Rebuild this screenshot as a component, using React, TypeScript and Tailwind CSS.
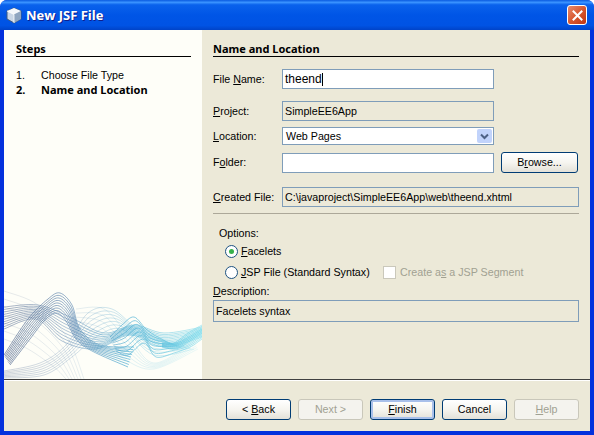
import React from "react";

type Pt = [number, number];

// smooth line through the points (catmull-rom turned into beziers)
const smooth = (pts: Pt[]) => {
  let d = `M${pts[0][0]} ${pts[0][1]}`;
  for (let i = 0; i < pts.length - 1; i++) {
    const p0 = pts[Math.max(i - 1, 0)];
    const p1 = pts[i];
    const p2 = pts[i + 1];
    const p3 = pts[Math.min(i + 2, pts.length - 1)];
    const c1x = p1[0] + (p2[0] - p0[0]) / 6;
    const c1y = p1[1] + (p2[1] - p0[1]) / 6;
    const c2x = p2[0] - (p3[0] - p1[0]) / 6;
    const c2y = p2[1] - (p3[1] - p1[1]) / 6;
    d += ` C${c1x.toFixed(1)} ${c1y.toFixed(1)} ${c2x.toFixed(1)} ${c2y.toFixed(1)} ${p2[0]} ${p2[1]}`;
  }
  return d;
};

// x from panel edge, y from the top of the drawing (y=280 on the page)
const bundles: { top: Pt[]; bottom: Pt[]; n: number; opacity: number; width: number }[] = [
  // tall peak on the left, comes down into the knot near x=75
  { top: [[0, 76], [24, 40], [44, 20], [56, 14], [68, 26], [76, 50], [96, 66], [130, 68]], bottom: [[6, 86], [26, 60], [40, 42], [52, 34], [62, 42], [72, 60], [88, 72], [124, 88]], n: 9, opacity: 0.72, width: 0.9 },
  // dark flat bundle falling from the left edge
  { top: [[0, 28], [34, 26], [66, 38], [100, 54], [130, 46], [160, 54], [198, 48]], bottom: [[0, 50], [32, 40], [58, 62], [92, 70], [126, 56], [160, 68], [198, 58]], n: 10, opacity: 0.55, width: 0.9 },
  // rising from bottom left, pale
  { top: [[0, 92], [36, 84], [62, 66], [84, 34], [108, 30], [136, 52], [170, 66]], bottom: [[0, 99], [40, 96], [68, 78], [92, 58], [118, 50], [150, 76], [190, 70]], n: 7, opacity: 0.3, width: 0.9 },
  // cyan double waves
  { top: [[106, 58], [118, 46], [130, 38], [142, 50], [154, 58], [172, 64], [198, 50]], bottom: [[112, 72], [124, 76], [140, 64], [152, 78], [170, 74], [186, 68], [198, 60]], n: 8, opacity: 0.68, width: 0.9 },
  // thick pale end of the ribbon
  { top: [[158, 64], [170, 64], [184, 54], [198, 46]], bottom: [[158, 68], [172, 70], [186, 62], [198, 54]], n: 7, opacity: 0.65, width: 0.9 },
  // faint long arcs
  { top: [[0, 12], [34, 26], [64, 60], [80, 100]], bottom: [[0, 60], [24, 70], [50, 88], [62, 100]], n: 7, opacity: 0.18, width: 0.8 },
  { top: [[72, 30], [100, 30], [124, 56], [150, 84], [190, 62]], bottom: [[70, 50], [96, 62], [120, 80], [150, 90], [194, 70]], n: 6, opacity: 0.2, width: 0.8 },
];

const Wave = () => {
  const lines: React.ReactNode[] = [];
  bundles.forEach((b, i) => {
    for (let k = 0; k < b.n; k++) {
      const t = k / (b.n - 1);
      const pts = b.top.map((p, j): Pt => [
        +(p[0] + (b.bottom[j][0] - p[0]) * t).toFixed(1),
        +(p[1] + (b.bottom[j][1] - p[1]) * t).toFixed(1),
      ]);
      lines.push(
        <path key={`${i}-${k}`} d={smooth(pts)} stroke="url(#waveColor)" strokeWidth={b.width} strokeOpacity={b.opacity} fill="none" />
      );
    }
  });
  return (
    <svg width="198" height="100" viewBox="0 0 198 100" className="block">
      <defs>
        <linearGradient id="waveColor" gradientUnits="userSpaceOnUse" x1="0" y1="0" x2="198" y2="0">
          <stop offset="0" stopColor="#4f6288" />
          <stop offset="0.35" stopColor="#5f8ab4" />
          <stop offset="0.65" stopColor="#3fabd2" />
          <stop offset="1" stopColor="#7fdcec" />
        </linearGradient>
      </defs>
      {lines}
    </svg>
  );
};

const CubeIcon = () => (
  <svg width="16" height="17" viewBox="0 0 16 17">
    <path d="M8 1 L15 4 L15 12 L8 16 L1 12 L1 4 Z" fill="#c9d6e6" stroke="#3c5a80" strokeWidth="1" />
    <path d="M8 1 L15 4 L8 7.5 L1 4 Z" fill="#f4f7fb" />
    <path d="M8 7.5 L15 4 L15 12 L8 16 Z" fill="#8fa5c0" />
    <path d="M1 4 L8 7.5 L8 16" fill="none" stroke="#ffffff" strokeWidth="0.8" />
  </svg>
);

const CloseIcon = () => (
  <svg width="11" height="11" viewBox="0 0 11 11">
    <path d="M1.5 1.5 L9.5 9.5 M9.5 1.5 L1.5 9.5" stroke="#fff" strokeWidth="2" strokeLinecap="square" />
  </svg>
);

const fieldBorder = "border border-[#7f9db9]";
const boldText = "font-bold font-['Noto_Sans',sans-serif] text-[11px]";

const Label = ({ children }: { children: React.ReactNode }) => (
  <div className="w-[69px] shrink-0 whitespace-nowrap">{children}</div>
);

const XpButton = ({ children, width, disabled, active }: { children: React.ReactNode; width: string; disabled?: boolean; active?: boolean }) => (
  <div
    className={
      (disabled
        ? "border-[#c9c7ba] bg-[#f4f3ee] text-[#a1a192] "
        : "border-[#003c74] bg-linear-to-b from-white via-[#f6f5f0] to-[#e3e1d8] text-black ") +
      (active ? "shadow-[inset_0_0_0_2px_#a9c0ea] " : "") +
      width +
      " h-[21px] flex items-center justify-center rounded-[3px] border"
    }
  >
    <span>{children}</span>
  </div>
);

export default function App() {
  return (
    <div className="w-[594px] h-[435px] flex flex-col rounded-t-[7px] overflow-hidden bg-[#0331dd] text-[10.7px] leading-[13px] text-black font-['Liberation_Sans',sans-serif]">
      <div className="h-[30px] shrink-0 flex items-center pl-[6px] pr-[7px] bg-[linear-gradient(to_bottom,#0a5be0_0%,#3a93ff_8%,#0a62ec_16%,#0055e6_50%,#0053e4_85%,#0043c8_100%)]">
        <CubeIcon />
        <div className="ml-[4px] text-white font-bold text-[13px] font-['Open_Sans',sans-serif] [text-shadow:1px_1px_0_#0f1f8c]">New JSF File</div>
        <div className="ml-auto w-[20px] h-[20px] flex items-center justify-center rounded-[3px] border border-white bg-linear-to-br from-[#e58a6c] via-[#d8582f] to-[#c0340f]">
          <CloseIcon />
        </div>
      </div>

      <div className="flex-1 mx-[4px] mb-[4px] bg-[#ece9d8] flex flex-col">
        <div className="h-[349px] flex shrink-0">
          <div className="w-[198px] shrink-0 bg-[#fefef8] flex flex-col justify-between">
            <div className="pl-[12px] pr-[11px] pt-[12px]">
              <div className={`h-[15px] border-b border-black ${boldText}`}>Steps</div>
              <div className="mt-[12px] flex">
                <span className="w-[25px]">1.</span>
                <span>Choose File Type</span>
              </div>
              <div className={`mt-[1px] flex ${boldText}`}>
                <span className="w-[25px]">2.</span>
                <span>Name and Location</span>
              </div>
            </div>
            <Wave />
          </div>

          <div className="flex-1 px-[11px] pt-[12px]">
            <div className={`h-[15px] border-b border-black ${boldText}`}>Name and Location</div>

            <div className="mt-[12px] flex items-center">
              <Label>File <u>N</u>ame:</Label>
              <div className={`${fieldBorder} w-[212px] h-[20px] bg-white flex items-center pl-[2px] text-[12px]`}>
                <span>theend</span>
                <span className="w-px h-[13px] bg-black" />
              </div>
            </div>

            <div className="mt-[12px] flex items-center">
              <Label><u>P</u>roject:</Label>
              <div className={`${fieldBorder} w-[212px] h-[20px] flex items-center pl-[2px]`}>SimpleEE6App</div>
            </div>

            <div className="mt-[6px] flex items-center">
              <Label><u>L</u>ocation:</Label>
              <div className={`${fieldBorder} w-[212px] h-[18px] bg-white flex items-center pl-[3px] pr-px`}>
                <span>Web Pages</span>
                <span className="ml-auto w-[15px] h-[14px] rounded-[2px] bg-[#c1d3fb] flex items-center justify-center">
                  <svg width="9" height="7" viewBox="0 0 9 7">
                    <path d="M1 1.5 L4.5 5 L8 1.5" fill="none" stroke="#4d6185" strokeWidth="2" />
                  </svg>
                </span>
              </div>
            </div>

            <div className="mt-[7px] flex items-center">
              <Label>F<u>o</u>lder:</Label>
              <div className={`${fieldBorder} w-[212px] h-[20px] bg-white`} />
              <div className="ml-[7px]">
                <XpButton width="w-[77px]">B<u>r</u>owse...</XpButton>
              </div>
            </div>

            <div className="mt-[14px] flex items-center">
              <Label><u>C</u>reated File:</Label>
              <div className={`${fieldBorder} flex-1 h-[20px] flex items-center pl-[2px] whitespace-nowrap`}>C:\javaproject\SimpleEE6App\web\theend.xhtml</div>
            </div>

            <div className="mt-[6px] h-px bg-[#aca899]" />

            <div className="mt-[13px] pl-[6px]">Options:</div>
            <div className="mt-[5px] pl-[12px] flex items-center">
              <span className="w-[13px] h-[13px] rounded-full border border-[#1d5281] bg-white flex items-center justify-center">
                <span className="w-[5px] h-[5px] rounded-full bg-[#36b14a]" />
              </span>
              <span className="ml-[3px]"><u>F</u>acelets</span>
            </div>
            <div className="mt-[8px] pl-[12px] flex items-center">
              <span className="w-[13px] h-[13px] rounded-full border border-[#1d5281] bg-white" />
              <span className="ml-[3px] w-[142px] whitespace-nowrap"><u>J</u>SP File (Standard Syntax)</span>
              <span className="w-[13px] h-[13px] border border-[#cac8bb] bg-white" />
              <span className="ml-[4px] text-[#a1a192] whitespace-nowrap">Create a<u>s</u> a JSP Segment</span>
            </div>
            <div className="mt-[6px]"><u>D</u>escription:</div>
            <div className={`${fieldBorder} mt-[2px] h-[22px] flex items-center pl-[2px]`}>Facelets syntax</div>
          </div>
        </div>

        <div className="h-px bg-[#404040] shrink-0" />
        <div className="h-px bg-white shrink-0" />

        <div className="flex-1 pt-[18px] pr-[11px] flex justify-end">
          <div className="flex">
            <XpButton width="w-[65px]">&lt; <u>B</u>ack</XpButton>
            <div className="ml-[7px]"><XpButton width="w-[65px]" disabled>Next &gt;</XpButton></div>
            <div className="ml-[7px]"><XpButton width="w-[65px]" active><u>F</u>inish</XpButton></div>
            <div className="ml-[7px]"><XpButton width="w-[65px]">Cancel</XpButton></div>
            <div className="ml-[7px]"><XpButton width="w-[65px]" disabled><u>H</u>elp</XpButton></div>
          </div>
        </div>
      </div>
    </div>
  );
}
